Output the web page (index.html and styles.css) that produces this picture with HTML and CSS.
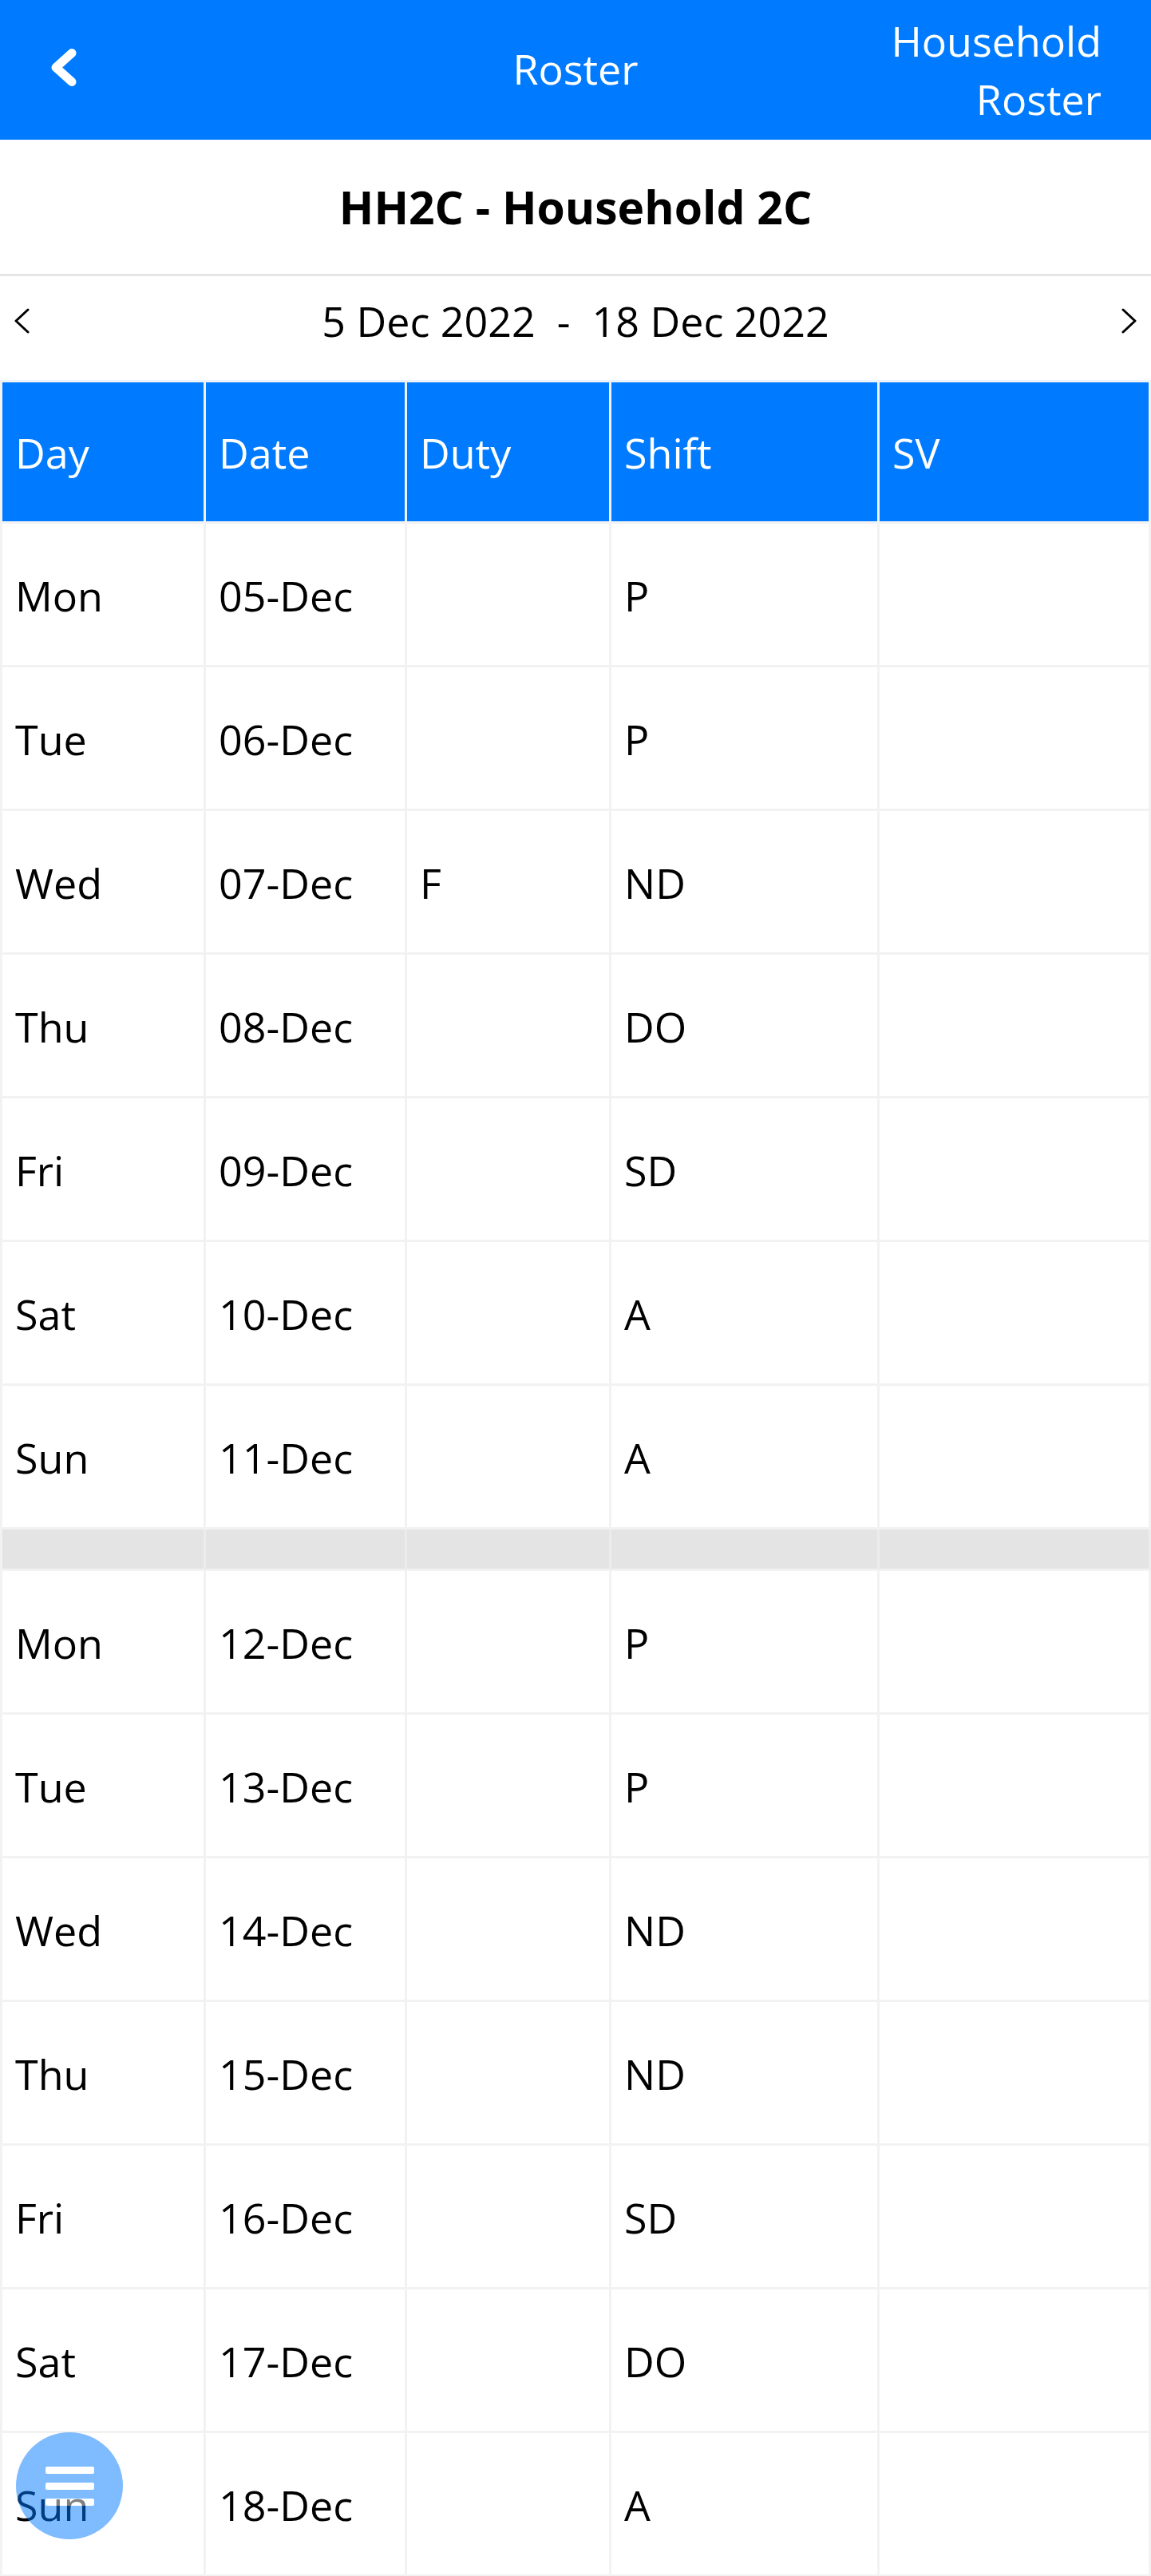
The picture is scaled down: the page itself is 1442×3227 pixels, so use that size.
FILE: index.html
```html
<!DOCTYPE html>
<html lang="en">
<head>
<meta charset="utf-8">
<title>Roster</title>
<link rel="stylesheet" href="styles.css">
</head>
<body>
<header class="topbar">
  <div class="topbar-left">
    <svg class="back-icon" width="40" height="56" viewBox="0 0 40 56" aria-hidden="true">
      <polyline points="28,6.5 8,24.5 28,42.5" fill="none" stroke="#fff" stroke-width="11" stroke-linecap="round" stroke-linejoin="round"/>
    </svg>
  </div>
  <div class="topbar-title">Roster</div>
  <div class="topbar-right">Household<br>Roster</div>
</header>

<section class="household">
  <h1 class="household-title">HH2C - Household 2C</h1>
</section>

<nav class="range">
  <svg class="range-chev" width="20" height="32" viewBox="0 0 20 32" aria-hidden="true">
    <polyline points="17,2 2,16 17,30" fill="none" stroke="#000" stroke-width="3" stroke-linecap="round" stroke-linejoin="round"/>
  </svg>
  <div class="range-text">5 Dec 2022&nbsp; - &nbsp;18 Dec 2022</div>
  <svg class="range-chev" width="20" height="32" viewBox="0 0 20 32" aria-hidden="true">
    <polyline points="3,2 18,16 3,30" fill="none" stroke="#000" stroke-width="3" stroke-linecap="round" stroke-linejoin="round"/>
  </svg>
</nav>

<table class="roster">
  <thead>
    <tr>
      <th class="c-day">Day</th>
      <th class="c-date">Date</th>
      <th class="c-duty">Duty</th>
      <th class="c-shift">Shift</th>
      <th class="c-sv">SV</th>
    </tr>
  </thead>
  <tbody>
    <tr><td>Mon</td><td>05-Dec</td><td></td><td>P</td><td></td></tr>
    <tr><td>Tue</td><td>06-Dec</td><td></td><td>P</td><td></td></tr>
    <tr><td>Wed</td><td>07-Dec</td><td>F</td><td>ND</td><td></td></tr>
    <tr><td>Thu</td><td>08-Dec</td><td></td><td>DO</td><td></td></tr>
    <tr><td>Fri</td><td>09-Dec</td><td></td><td>SD</td><td></td></tr>
    <tr><td>Sat</td><td>10-Dec</td><td></td><td>A</td><td></td></tr>
    <tr><td>Sun</td><td>11-Dec</td><td></td><td>A</td><td></td></tr>
    <tr class="week-gap"><td></td><td></td><td></td><td></td><td></td></tr>
    <tr><td>Mon</td><td>12-Dec</td><td></td><td>P</td><td></td></tr>
    <tr><td>Tue</td><td>13-Dec</td><td></td><td>P</td><td></td></tr>
    <tr><td>Wed</td><td>14-Dec</td><td></td><td>ND</td><td></td></tr>
    <tr><td>Thu</td><td>15-Dec</td><td></td><td>ND</td><td></td></tr>
    <tr><td>Fri</td><td>16-Dec</td><td></td><td>SD</td><td></td></tr>
    <tr><td>Sat</td><td>17-Dec</td><td></td><td>DO</td><td></td></tr>
    <tr><td>Sun</td><td>18-Dec</td><td></td><td>A</td><td></td></tr>
  </tbody>
</table>

<button class="fab" type="button" aria-label="Menu">
  <span class="fab-bar"></span>
  <span class="fab-bar"></span>
  <span class="fab-bar"></span>
</button>
</body>
</html>
```

FILE: styles.css
```css
html, body {
  margin: 0;
  padding: 0;
  background: #fff;
}

body {
  font-family: "Open Sans", "Noto Sans", sans-serif;
  font-size: 52px;
  color: #000;
  width: 1442px;
}

/* Top bar */
.topbar {
  height: 175px;
  background: #007bff;
  color: #fff;
  display: grid;
  grid-template-columns: 1fr auto 1fr;
  align-items: center;
}

.topbar-left {
  display: flex;
  align-items: center;
  padding-left: 62px;
}

.back-icon {
  display: block;
}

.topbar-title {
  font-size: 52px;
  line-height: 1;
  padding-bottom: 4px;
}

.topbar-right {
  justify-self: end;
  text-align: right;
  padding-right: 62px;
  padding-bottom: 2px;
  font-size: 52px;
  line-height: 73px;
}

/* Household title */
.household {
  height: 168px;
  display: flex;
  align-items: center;
  justify-content: center;
  border-bottom: 3px solid #e6e6e6;
}

.household-title {
  margin: 0;
  font-size: 57px;
  font-weight: 700;
  line-height: 1;
}

/* Date range */
.range {
  display: flex;
  align-items: center;
  justify-content: space-between;
  padding: 19px 18px 37px 18px;
  height: 74px;
}

.range-chev {
  display: block;
}

.range-text {
  font-size: 52px;
  line-height: 74px;
  white-space: nowrap;
}

/* Table */
.roster {
  width: 1442px;
  table-layout: fixed;
  border-collapse: separate;
  border-spacing: 0;
  border-left: 3px solid #f2f2f2;
  border-top: 3px solid #eef3fa;
}

.roster th,
.roster td {
  box-sizing: border-box;
  border-right: 3px solid #f2f2f2;
  border-bottom: 3px solid #f2f2f2;
  padding: 2px 15px 0 16px;
  text-align: left;
  vertical-align: middle;
  font-weight: 400;
  font-size: 52px;
  line-height: 74px;
  white-space: nowrap;
}

.roster th {
  background: #007bff;
  color: #fff;
  height: 177px;
  border-right-color: #eef3fa;
}

.roster td {
  height: 180px;
}

.c-day { width: 255px; }
.c-date { width: 252px; }
.c-duty { width: 256px; }
.c-shift { width: 336px; }
.c-sv { width: 340px; }

.roster .week-gap td {
  height: 52px;
  padding: 0;
  background: #e4e4e4;
  border-right-color: #ececec;
}

/* Floating menu button */
.fab {
  position: fixed;
  left: 20px;
  bottom: 46px;
  width: 134px;
  height: 134px;
  border: none;
  border-radius: 50%;
  background: #007bff;
  opacity: 0.5;
  padding: 0;
  display: flex;
  flex-direction: column;
  align-items: center;
  justify-content: center;
  gap: 11px;
}

.fab-bar {
  display: block;
  width: 61px;
  height: 9px;
  border-radius: 2px;
  background: #fff;
}
```
